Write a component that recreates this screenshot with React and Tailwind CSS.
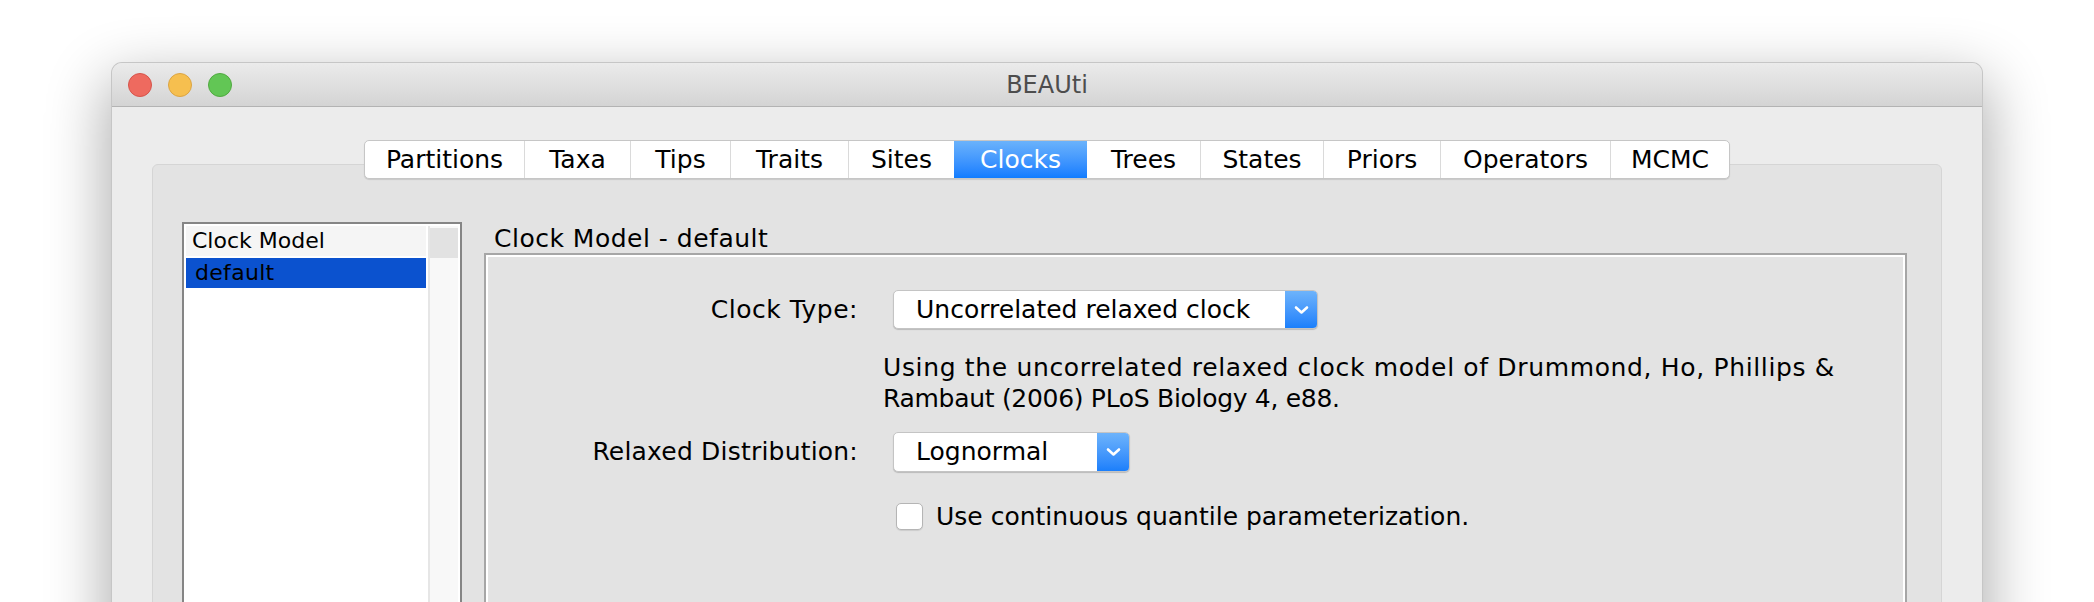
const tabs = [
  { name: 'Partitions', w: 'w-[159px]' },
  { name: 'Taxa', w: 'w-[106px]' },
  { name: 'Tips', w: 'w-[100px]' },
  { name: 'Traits', w: 'w-[118px]' },
  { name: 'Sites', w: 'w-[106px]' },
  { name: 'Clocks', w: 'w-[133px]' },
  { name: 'Trees', w: 'w-[113px]' },
  { name: 'States', w: 'w-[123px]' },
  { name: 'Priors', w: 'w-[117px]' },
  { name: 'Operators', w: 'w-[170px]' },
  { name: 'MCMC', w: 'w-[119px]' },
];

function Chevron() {
  return (
    <svg width="15" height="10" viewBox="0 0 15 10" fill="none">
      <path d="M2 2.5 L7.5 7.5 L13 2.5" stroke="white" strokeWidth="2.6" strokeLinecap="round" strokeLinejoin="round" />
    </svg>
  );
}

function Combo({ value, width }) {
  return (
    <div className={`flex h-full ${width} rounded-[5px] border border-[#c4c4c4] bg-white shadow-[0_1px_1px_rgba(0,0,0,0.18)] overflow-hidden`}>
      <div className="flex-1 flex items-center pl-[22px] text-black">{value}</div>
      <div className="w-[32px] flex items-center justify-center bg-gradient-to-b from-[#6db3fb] to-[#1a7ffb]">
        <Chevron />
      </div>
    </div>
  );
}

export default function App() {
  return (
    <div
      className="w-[2094px] h-[602px] overflow-hidden bg-white pl-[112px] pt-[63px]"
      style={{ fontFamily: '"DejaVu Sans", "Noto Sans", sans-serif' }}
    >
      <div className="w-[1870px] h-[600px] rounded-t-[10px] bg-[#ececec] shadow-[0_22px_60px_6px_rgba(0,0,0,0.32)] ring-1 ring-[#c6c6c6] overflow-hidden flex flex-col">
        {/* title bar */}
        <div className="relative h-[44px] shrink-0 flex items-center bg-gradient-to-b from-[#ebebeb] to-[#d4d4d4] border-b border-[#b3b3b3]">
          <div className="flex gap-[16px] pl-[16px]">
            <div className="w-[24px] h-[24px] rounded-full bg-[#ee6a5f] border border-[#d5544b]" />
            <div className="w-[24px] h-[24px] rounded-full bg-[#f6bf4f] border border-[#dba443]" />
            <div className="w-[24px] h-[24px] rounded-full bg-[#62c655] border border-[#51a940]" />
          </div>
          <div className="absolute inset-0 flex items-center justify-center text-[24px] text-[#4d4d4d]">BEAUti</div>
        </div>

        {/* body */}
        <div className="flex-1 flex flex-col pt-[33px]">
          <div className="relative z-10 flex justify-center">
            <div className="flex h-[39px] rounded-[5px] border border-[#c6c6c6] bg-white shadow-[0_1px_1px_rgba(0,0,0,0.12)] overflow-hidden text-[25px] text-black">
              {tabs.map((t, i) => (
                <div
                  key={t.name}
                  className={
                    t.name === 'Clocks'
                      ? `${t.w} flex items-center justify-center bg-gradient-to-b from-[#6ab2fb] to-[#0f7cff] text-white`
                      : `${t.w} flex items-center justify-center ${i > 0 && tabs[i - 1].name !== 'Clocks' ? 'border-l border-[#dadada]' : ''}`
                  }
                >
                  {t.name}
                </div>
              ))}
            </div>
          </div>

          <div className="-mt-[15px] mx-[40px] flex-1 rounded-[6px] border border-[#d5d5d5] bg-[#e3e3e3] pt-[57px] pl-[29px] pr-[34px] flex">
            {/* list */}
            <div className="w-[280px] h-[500px] border-2 border-[#858585] bg-white p-[2px] flex text-[22px] text-black">
              <div className="w-[240px] flex flex-col">
                <div className="h-[30px] bg-[#f5f5f5] pl-[6px] leading-[30px]">Clock Model</div>
                <div className="h-[30px] mt-[2px] bg-[#0b52cf] pl-[9px] leading-[30px] tracking-[0.3px]">default</div>
              </div>
              <div className="flex-1 ml-[2px] flex flex-col border-l-2 border-[#e6e6e6] bg-[#f8f8f8]">
                <div className="h-[30px] mt-[2px] bg-[#e2e2e2]" />
              </div>
            </div>

            {/* right side */}
            <div className="flex-1 ml-[22px] flex flex-col">
              <div className="h-[31px] pl-[10px] leading-[33px] text-[25px] tracking-[0.5px] text-black">Clock Model - default</div>
              <div className="flex-1 border-2 border-[#a6a6a6] shadow-[inset_0_0_0_2px_#ffffff] pt-[35px] flex flex-col text-[25px] text-black">
                <div className="flex items-center h-[39px]">
                  <div className="w-[372px] text-right tracking-[0.5px]">Clock Type:</div>
                  <div className="ml-[35px] h-full">
                    <Combo value="Uncorrelated relaxed clock" width="w-[425px]" />
                  </div>
                </div>
                <div className="mt-[23px] pl-[397px] leading-[31px]">
                  <span className="tracking-[0.65px]">Using the uncorrelated relaxed clock model of Drummond, Ho, Phillips &amp;</span>
                  <br />
                  <span className="tracking-[-0.3px]">Rambaut (2006) PLoS Biology 4, e88.</span>
                </div>
                <div className="mt-[18px] flex items-center h-[40px]">
                  <div className="w-[372px] text-right tracking-[0.2px]">Relaxed Distribution:</div>
                  <div className="ml-[35px] h-full">
                    <Combo value="Lognormal" width="w-[237px]" />
                  </div>
                </div>
                <div className="mt-[31px] h-[27px] pl-[410px] flex items-center gap-[13px]">
                  <div className="w-[27px] h-[27px] rounded-[5px] border border-[#b5b5b5] bg-white shadow-[0_1px_1px_rgba(0,0,0,0.1)]" />
                  <div>Use continuous quantile parameterization.</div>
                </div>
              </div>
            </div>
          </div>
        </div>
      </div>
    </div>
  );
}
